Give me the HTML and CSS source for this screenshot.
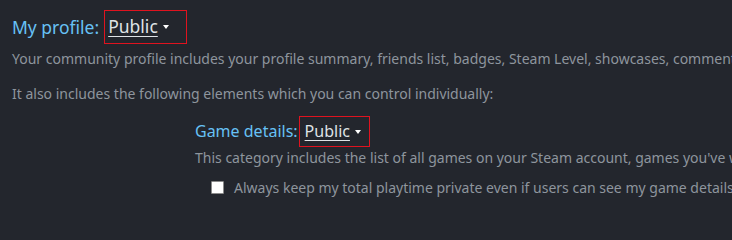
FILE: index.html
```html
<!DOCTYPE html>
<html lang="en">
<head>
<meta charset="utf-8">
<title>Privacy settings</title>
<link rel="stylesheet" href="styles.css">
</head>
<body>
<div class="page">
  <div class="setting-row main">
    <span class="setting-label">My profile:</span>
    <span class="dropdown">
      <span class="dropdown-value">Public</span>
      <span class="caret"></span>
    </span>
  </div>
  <p class="desc first">Your community profile includes your profile summary, friends list, badges, Steam Level, showcases, comments, and group membership.</p>
  <p class="desc second">It also includes the following elements which you can control individually:</p>

  <div class="sub">
    <div class="setting-row secondary">
      <span class="setting-label">Game details:</span>
      <span class="dropdown">
        <span class="dropdown-value">Public</span>
        <span class="caret"></span>
      </span>
    </div>
    <p class="desc sub-desc">This category includes the list of all games on your Steam account, games you've wishlisted, your achievements and your playtime.</p>
    <label class="check">
      <span class="checkbox"></span>
      <span class="check-text">Always keep my total playtime private even if users can see my game details.</span>
    </label>
  </div>
</div>
</body>
</html>
```
FILE: styles.css
```css
html, body {
  margin: 0;
  padding: 0;
  background: #23262d;
  overflow: hidden;
  height: 216px;
}
body {
  font-family: "Noto Sans", "Open Sans", Arial, sans-serif;
  color: #8e959d;
  white-space: nowrap;
}
.page {
  padding: 10px 12px 0;
  height: 206px;
  overflow: hidden;
}
.setting-row {
  display: flex;
  align-items: center;
}
.setting-label {
  color: #67c1f5;
}
.main {
  font-size: 17.5px;
  line-height: 25px;
}
.main .setting-label {
  margin-right: 5px;
}
.main .dropdown {
  padding: 3px 17px 4px 3px;
}
.secondary {
  font-size: 16px;
  line-height: 21px;
}
.secondary .setting-label {
  margin-right: 1px;
}
.secondary .dropdown {
  padding: 4px 8px 4px 5px;
}
.dropdown {
  display: inline-flex;
  align-items: center;
  border: 1px solid #e0131f;
  cursor: pointer;
}
.dropdown-value {
  color: #dfe3e6;
  text-decoration: underline;
  text-underline-offset: 3px;
  text-decoration-thickness: 1px;
}
.caret {
  flex-shrink: 0;
  width: 0;
  height: 0;
  margin-left: 5px;
  border-left: 3.5px solid transparent;
  border-right: 3.5px solid transparent;
  border-top: 4px solid #ffffff;
}
.desc {
  font-size: 14px;
  line-height: 19px;
  margin: 0;
}
.first {
  margin-top: 5px;
}
.second {
  margin-top: 16px;
}
.sub {
  margin-left: 183px;
  margin-top: 13px;
}
.sub-desc {
  margin-top: 1px;
}
.check {
  display: flex;
  align-items: center;
  margin-top: 11px;
  margin-left: 16px;
  font-size: 14px;
  line-height: 19px;
}
.checkbox {
  flex-shrink: 0;
  width: 11px;
  height: 11px;
  background: #ffffff;
  border: 1px solid #8a8a8a;
  border-radius: 1px;
  margin-right: 10px;
}
```
